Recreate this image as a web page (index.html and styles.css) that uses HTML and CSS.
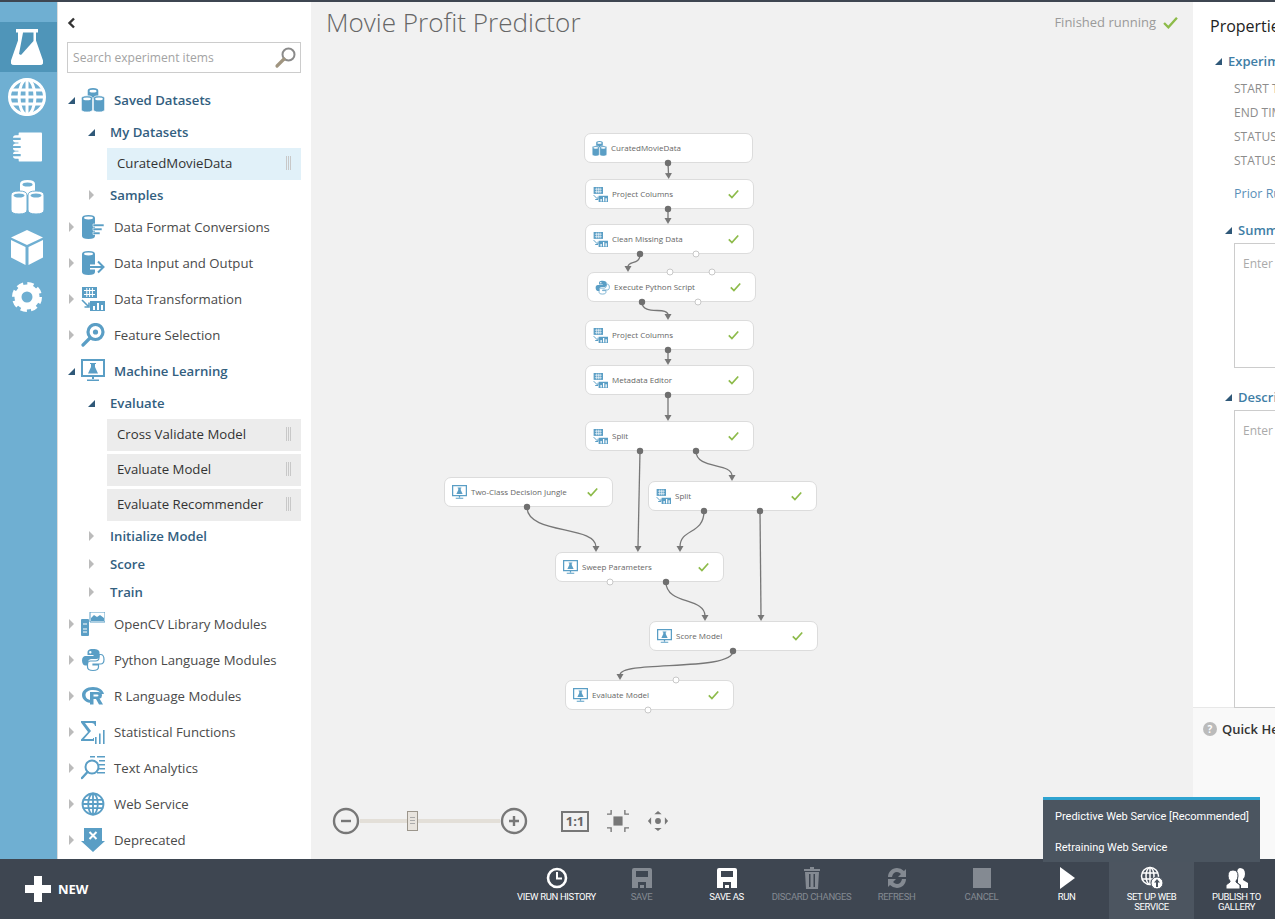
FILE: index.html
```html
<!DOCTYPE html>
<html lang="en">
<head>
    <meta charset="UTF-8">
    <title>Movie Profit Predictor</title>
    <link rel="stylesheet" href="styles.css">
</head>
<body>
    <!-- shared icons -->
    <svg class="defs" width="0" height="0">
        <symbol id="i-flask" viewBox="0 0 32 36">
            <path d="M5 0h22v3.5h-2v8l7 20q1 4.500-3 4.500H3q-4 0-3-4.500l7-20v-8H5z"/>
            <path d="M12 3.500h10.500v8.500L10 26l-2-1z" fill="var(--bg)"/>
        </symbol>
        <symbol id="i-globe" viewBox="0 0 40 40">
            <g fill="none" stroke="currentColor" stroke-width="3">
                <circle cx="20" cy="20" r="17.5"/>
                <ellipse cx="20" cy="20" rx="8" ry="17.5"/>
                <path d="M20 2v36M3 13h34M3 27h34M2 20h36"/>
            </g>
        </symbol>
        <symbol id="i-notebook" viewBox="0 0 32 32">
            <rect x="6" y="0" width="26" height="32" rx="1"/>
            <rect x="0" y="3" width="12" height="8" rx="3"/>
            <rect x="0" y="12" width="12" height="8" rx="3"/>
            <rect x="0" y="21" width="12" height="8" rx="3"/>
            <path d="M0 7h8.500M0 16h8.500M0 25h8.500" stroke="var(--bg)" stroke-width="2.400"/>
            <path d="M5 0v2.500M5 29.500v2.500" stroke="var(--bg)" stroke-width="2"/>
        </symbol>
        <symbol id="i-cylinders" viewBox="0 0 33 34">
            <path d="M9 4q0-4 7.500-4T24 4v8q0 3-7.500 3T9 12z"/>
            <ellipse cx="16.5" cy="4.500" rx="5" ry="2" fill="var(--bg)"/>
            <path d="M0 15q0-4 8-4t8 4v15q0 4-8 4t-8-4z" stroke="var(--bg)"/>
            <ellipse cx="8" cy="15.5" rx="5.5" ry="2" fill="var(--bg)"/>
            <path d="M17 15q0-4 8-4t8 4v15q0 4-8 4t-8-4z" stroke="var(--bg)"/>
            <ellipse cx="25" cy="15.5" rx="5.5" ry="2" fill="var(--bg)"/>
        </symbol>
        <symbol id="i-cube" viewBox="0 0 32 35">
            <path d="M16 0l16 7.500L16 15 0 7.500z"/>
            <path d="M0 10l14.500 7v18L0 27.500zM32 10l-14.500 7v18L32 27.500z"/>
        </symbol>
        <symbol id="i-gear" viewBox="0 0 30 30">
            <circle cx="15" cy="15" r="9" fill="none" stroke="currentColor" stroke-width="7"/>
            <circle cx="15" cy="15" r="13" fill="none" stroke="currentColor" stroke-width="4" stroke-dasharray="6.2 4"/>
        </symbol>
        <symbol id="i-cyl-text" viewBox="0 0 24 24">
            <path d="M1 3q0-3 6.500-3T14 3v18q0 3-6.500 3T1 21z"/>
            <ellipse cx="7.5" cy="3" rx="4.5" ry="1.4" fill="#fff"/>
            <path d="M12 9h11v2.500H12zM12 13h9v2.500h-9zM12 17h7v2.500h-7z" stroke="#fff" stroke-width=".6"/>
        </symbol>
        <symbol id="i-cyl-arrow" viewBox="0 0 24 24">
            <path d="M1 3q0-3 6.500-3T14 3v18q0 3-6.500 3T1 21z"/>
            <ellipse cx="7.5" cy="3" rx="4.5" ry="1.4" fill="#fff"/>
            <path d="M9 16h14M17 10l6 6-6 6" fill="none" stroke="#fff" stroke-width="5"/>
            <path d="M9 16h13M17 10.500l5.500 5.500-5.500 5.500" fill="none" stroke="currentColor" stroke-width="2"/>
        </symbol>
        <symbol id="i-transform" viewBox="0 0 24 24">
            <rect x="1" y="0" width="15" height="11"/>
            <path d="M3 3.500h11M3 7.500h11M5.800 1v9M8.600 1v9M11.400 1v9" stroke="#fff" stroke-width="1"/>
            <path d="M1 13l6 6M3.500 20H8v-4.500" fill="none" stroke="currentColor" stroke-width="1.6"/>
            <rect x="9" y="14" width="15" height="10"/>
            <path d="M12 19h2v4h-2zM16 16h2v7h-2zM20 18h2v5h-2z" fill="#fff"/>
        </symbol>
        <symbol id="i-search-dot" viewBox="0 0 24 24">
            <circle cx="14.5" cy="9" r="7.5" fill="none" stroke="currentColor" stroke-width="3.2"/>
            <circle cx="14.5" cy="9" r="2.6"/>
            <path d="M9 15l-7 7" stroke="currentColor" stroke-width="3.2" stroke-linecap="round"/>
        </symbol>
        <symbol id="i-monitor" viewBox="0 0 24 24">
            <rect x="1" y="1" width="22" height="16" fill="none" stroke="currentColor" stroke-width="2"/>
            <path d="M9 4h6v1h-1v3l3 6.500H7L10 8V5H9z"/>
            <path d="M11 17h2v3h-2zM6 20.500h12V22H6z"/>
        </symbol>
        <symbol id="i-opencv" viewBox="0 0 24 24">
            <path d="M9 0h15v10H9z" fill="none" stroke="currentColor" stroke-width="1"/>
            <path d="M10 9V6l3-3 3 2 3-2 4 3v3z"/>
            <path d="M0 8q0-1 1-1h6q1 0 1 1v15q0 1-1 1H1q-1 0-1-1z"/>
            <path d="M2 12h4M2 17h4M2 20h4" stroke="#fff" stroke-width="1.2"/>
        </symbol>
        <symbol id="i-python" viewBox="0 0 24 24">
            <path d="M12 1C7 1 6.500 3 6.500 4.500V7H12.500v1H4.500C2.500 8 1 9.500 1 12.500s1.500 5 3.500 5H7v-3c0-2 1.500-3.500 3.500-3.500h5c1.500 0 3-1.300 3-3V4.500C18.500 2.500 16.500 1 12 1zM9.300 3a1.200 1.200 0 1 1 0 2.400 1.200 1.200 0 0 1 0-2.400z"/>
            <path d="M12 22.500c5 0 5.500-2 5.500-3.500V17H12v-1h7.500c2 0 3.500-1.500 3.500-4.500s-1.500-5-3.500-5H18v3c0 2-1.500 3.500-3.500 3.500h-5C8 13 6.500 14.300 6.500 16v3c0 2 1 3.500 5.500 3.500z" fill="none" stroke="currentColor" stroke-width="1.2"/>
        </symbol>
        <symbol id="i-r" viewBox="0 0 24 24">
            <path d="M12 3C5.500 3 1 6.500 1 11s4.500 8 10 8v-3c-4 0-6.500-2-6.500-5S7.500 6 12 6s7 1.500 8 4h3c-1-4-5-7-11-7z"/>
            <path d="M9 8h8q4 0 4 3.500 0 2.500-2.500 3l3.500 6h-4l-3-5.500h-2.500V20.500H9z"/>
            <path d="M12.500 10.500v2h3.500q1.500 0 1.500-1t-1.500-1z" fill="#fff"/>
        </symbol>
        <symbol id="i-sigma" viewBox="0 0 24 24">
            <path d="M0 1h15v5h-1q-.5-3-3.500-3H4l6 8-7 8h9v-1h1v3H0v-1.500L7 12 0 2.500z"/>
            <path d="M14 17h1.600v7H14zM18 13.500h1.600V24H18zM22 10h1.600v14H22z"/>
        </symbol>
        <symbol id="i-text-search" viewBox="0 0 24 24">
            <path d="M9 0h5v1.500H9zM16 0h8v1.500h-8zM18 4h6v1.500h-6zM18 8h6v1.500h-6zM18 12h6v1.500h-6zM16 16h8v1.500h-8z"/>
            <circle cx="11" cy="11" r="6.500" fill="none" stroke="currentColor" stroke-width="2"/>
            <path d="M6.500 16L1 22" stroke="currentColor" stroke-width="2.4" stroke-linecap="round"/>
        </symbol>
        <symbol id="i-deprecated" viewBox="0 0 24 24">
            <path d="M3 0h18v13h3L12 24 0 13h3z"/>
            <path d="M8.500 4l7 7M15.500 4l-7 7" stroke="#fff" stroke-width="2"/>
        </symbol>
        <symbol id="i-check" viewBox="0 0 14 12">
            <path d="M1 6.500l4 4L13 1.500" fill="none" stroke="currentColor" stroke-width="2.2"/>
        </symbol>
    </svg>

    <div class="topline"></div>

    <div class="main">
        <nav class="rail">
            <a class="rail-item active"><svg class="rail-flask"><use href="#i-flask"/></svg></a>
            <a class="rail-item"><svg class="rail-globe"><use href="#i-globe"/></svg></a>
            <a class="rail-item"><svg class="rail-note"><use href="#i-notebook"/></svg></a>
            <a class="rail-item"><svg class="rail-cyl"><use href="#i-cylinders"/></svg></a>
            <a class="rail-item"><svg class="rail-cube"><use href="#i-cube"/></svg></a>
            <a class="rail-item"><svg class="rail-gear"><use href="#i-gear"/></svg></a>
        </nav>

        <aside class="palette">
            <div class="collapse">
                <svg width="9" height="12" viewBox="0 0 9 12"><path d="M7 1.500L2.500 6 7 10.500" fill="none" stroke="#333" stroke-width="2.400"/></svg>
            </div>
            <div class="search">
                <span>Search experiment items</span>
                <svg width="24" height="24" viewBox="0 0 24 24"><circle cx="14.5" cy="8.500" r="6" fill="none" stroke="#8a8a8a" stroke-width="2"/><path d="M10 13l-7 7" stroke="#a09580" stroke-width="3.200" stroke-linecap="round"/></svg>
            </div>

            <div class="tree">
                <div class="cat open"><i class="tri-open"></i><svg class="ico"><use href="#i-cylinders"/></svg>Saved Datasets</div>
                <div class="sub open"><i class="tri-open"></i>My Datasets</div>
                <div class="leaf selected">CuratedMovieData<b class="grip"></b></div>
                <div class="sub"><i class="tri-closed"></i>Samples</div>
                <div class="cat"><i class="tri-closed"></i><svg class="ico"><use href="#i-cyl-text"/></svg>Data Format Conversions</div>
                <div class="cat"><i class="tri-closed"></i><svg class="ico"><use href="#i-cyl-arrow"/></svg>Data Input and Output</div>
                <div class="cat"><i class="tri-closed"></i><svg class="ico"><use href="#i-transform"/></svg>Data Transformation</div>
                <div class="cat"><i class="tri-closed"></i><svg class="ico"><use href="#i-search-dot"/></svg>Feature Selection</div>
                <div class="cat open"><i class="tri-open"></i><svg class="ico"><use href="#i-monitor"/></svg>Machine Learning</div>
                <div class="sub open"><i class="tri-open"></i>Evaluate</div>
                <div class="leaf">Cross Validate Model<b class="grip"></b></div>
                <div class="leaf">Evaluate Model<b class="grip"></b></div>
                <div class="leaf">Evaluate Recommender<b class="grip"></b></div>
                <div class="sub"><i class="tri-closed"></i>Initialize Model</div>
                <div class="sub"><i class="tri-closed"></i>Score</div>
                <div class="sub"><i class="tri-closed"></i>Train</div>
                <div class="cat"><i class="tri-closed"></i><svg class="ico"><use href="#i-opencv"/></svg>OpenCV Library Modules</div>
                <div class="cat"><i class="tri-closed"></i><svg class="ico"><use href="#i-python"/></svg>Python Language Modules</div>
                <div class="cat"><i class="tri-closed"></i><svg class="ico"><use href="#i-r"/></svg>R Language Modules</div>
                <div class="cat"><i class="tri-closed"></i><svg class="ico"><use href="#i-sigma"/></svg>Statistical Functions</div>
                <div class="cat"><i class="tri-closed"></i><svg class="ico"><use href="#i-text-search"/></svg>Text Analytics</div>
                <div class="cat"><i class="tri-closed"></i><svg class="ico"><use href="#i-globe"/></svg>Web Service</div>
                <div class="cat"><i class="tri-closed"></i><svg class="ico"><use href="#i-deprecated"/></svg>Deprecated</div>
            </div>
        </aside>

        <section class="canvas">
            <header class="canvas-head">
                <h1>Movie Profit Predictor</h1>
                <div class="status">Finished running <svg class="status-check"><use href="#i-check"/></svg></div>
            </header>

            <!-- node positions are the experiment's own data -->
            <div class="node" style="left:273px;top:131px"><svg class="node-ico"><use href="#i-cylinders"/></svg>CuratedMovieData</div>
            <div class="node done" style="left:274px;top:177px"><svg class="node-ico"><use href="#i-transform"/></svg>Project Columns<svg class="node-check"><use href="#i-check"/></svg></div>
            <div class="node done" style="left:274px;top:222px"><svg class="node-ico"><use href="#i-transform"/></svg>Clean Missing Data<svg class="node-check"><use href="#i-check"/></svg></div>
            <div class="node done" style="left:276px;top:270px"><svg class="node-ico"><use href="#i-python"/></svg>Execute Python Script<svg class="node-check"><use href="#i-check"/></svg></div>
            <div class="node done" style="left:274px;top:318px"><svg class="node-ico"><use href="#i-transform"/></svg>Project Columns<svg class="node-check"><use href="#i-check"/></svg></div>
            <div class="node done" style="left:274px;top:363px"><svg class="node-ico"><use href="#i-transform"/></svg>Metadata Editor<svg class="node-check"><use href="#i-check"/></svg></div>
            <div class="node done" style="left:274px;top:419px"><svg class="node-ico"><use href="#i-transform"/></svg>Split<svg class="node-check"><use href="#i-check"/></svg></div>
            <div class="node done" style="left:133px;top:475px"><svg class="node-ico"><use href="#i-monitor"/></svg>Two-Class Decision Jungle<svg class="node-check"><use href="#i-check"/></svg></div>
            <div class="node done" style="left:337px;top:479px"><svg class="node-ico"><use href="#i-transform"/></svg>Split<svg class="node-check"><use href="#i-check"/></svg></div>
            <div class="node done" style="left:244px;top:550px"><svg class="node-ico"><use href="#i-monitor"/></svg>Sweep Parameters<svg class="node-check"><use href="#i-check"/></svg></div>
            <div class="node done" style="left:338px;top:619px"><svg class="node-ico"><use href="#i-monitor"/></svg>Score Model<svg class="node-check"><use href="#i-check"/></svg></div>
            <div class="node done" style="left:254px;top:678px"><svg class="node-ico"><use href="#i-monitor"/></svg>Evaluate Model<svg class="node-check"><use href="#i-check"/></svg></div>

            <svg class="edges" width="882" height="857" viewBox="311 2 882 857">
                <defs>
                    <marker id="head" markerUnits="userSpaceOnUse" markerWidth="8" markerHeight="8" refX="1" refY="4" orient="auto">
                        <path d="M0 .5L6 4L0 7.500z" fill="#777"/>
                    </marker>
                </defs>
                <g class="wires">
                    <path d="M668 163L668.5 174" marker-end="url(#head)"/>
                    <path d="M668 209L668 219" marker-end="url(#head)"/>
                    <path d="M640 254C640 266 628 260 628 267" marker-end="url(#head)"/>
                    <path d="M642 302C642 316 668 306 668 315" marker-end="url(#head)"/>
                    <path d="M668 350L668 360" marker-end="url(#head)"/>
                    <path d="M668 395L668 416" marker-end="url(#head)"/>
                    <path d="M640 451L638 547" marker-end="url(#head)"/>
                    <path d="M696 451C696 470 732 462 732 476" marker-end="url(#head)"/>
                    <path d="M527 507C527 535 596 525 596 547" marker-end="url(#head)"/>
                    <path d="M704 511C704 535 680 528 680 547" marker-end="url(#head)"/>
                    <path d="M760 511L761 616" marker-end="url(#head)"/>
                    <path d="M666 582C666 605 705 597 705 616" marker-end="url(#head)"/>
                    <path d="M733 651C733 672 620 660 620 675" marker-end="url(#head)"/>
                </g>
                <g class="port-on">
                    <circle cx="668" cy="163" r="3.2"/><circle cx="668" cy="209" r="3.2"/>
                    <circle cx="640" cy="254" r="3.2"/><circle cx="642" cy="302" r="3.2"/>
                    <circle cx="668" cy="350" r="3.2"/><circle cx="668" cy="395" r="3.2"/>
                    <circle cx="640" cy="451" r="3.2"/><circle cx="696" cy="451" r="3.2"/>
                    <circle cx="527" cy="507" r="3.2"/><circle cx="704" cy="511" r="3.2"/>
                    <circle cx="760" cy="511" r="3.2"/><circle cx="666" cy="582" r="3.2"/>
                    <circle cx="733" cy="651" r="3.2"/>
                </g>
                <g class="port-off">
                    <circle cx="696" cy="254" r="3"/><circle cx="670" cy="272" r="3"/>
                    <circle cx="712" cy="272" r="3"/><circle cx="698" cy="302" r="3"/>
                    <circle cx="610" cy="582" r="3"/><circle cx="676" cy="680" r="3"/>
                    <circle cx="648" cy="710" r="3"/>
                </g>
            </svg>

            <div class="zoombar">
                <svg class="zoom-btn" width="28" height="28" viewBox="0 0 28 28"><circle cx="14" cy="14" r="12" fill="none" stroke="#777" stroke-width="2.400"/><path d="M9 14h10" stroke="#777" stroke-width="2.400"/></svg>
                <div class="slider"><span class="thumb"></span></div>
                <svg class="zoom-btn" width="28" height="28" viewBox="0 0 28 28"><circle cx="14" cy="14" r="12" fill="none" stroke="#777" stroke-width="2.400"/><path d="M9 14h10M14 9v10" stroke="#777" stroke-width="2.400"/></svg>
                <span class="actual">1:1</span>
                <svg class="fit" width="24" height="24" viewBox="0 0 24 24"><path d="M7 7h10v10H7z" fill="#777"/><path d="M0 4.500h4.500V0M24 4.500h-4.500V0M0 19.500h4.500V24M24 19.500h-4.500V24" fill="none" stroke="#777" stroke-width="1.500"/></svg>
                <svg class="pan" width="24" height="24" viewBox="0 0 24 24"><circle cx="12" cy="12" r="3.200" fill="#777"/><path d="M12 1l4 3.500H8zM12 23l4-3.500H8zM1 12l3.500-4v8zM23 12l-3.500-4v8z" fill="#777"/></svg>
            </div>
        </section>

        <aside class="props">
            <div class="props-body">
                <h2>Properties</h2>
                <div class="props-head first"><i class="tri-open"></i>Experiment Details</div>
                <div class="prop-line">START TIME</div>
                <div class="prop-line">END TIME</div>
                <div class="prop-line">STATUS CODE</div>
                <div class="prop-line">STATUS DETAILS</div>
                <a class="prior">Prior Run</a>
                <div class="props-head inner"><i class="tri-open"></i>Summary</div>
                <div class="area area-sm">Enter a summary</div>
                <div class="props-head inner"><i class="tri-open"></i>Description</div>
                <div class="area area-lg">Enter text</div>
            </div>
            <div class="quick"><span class="q-mark">?</span>Quick Help</div>
        </aside>
    </div>

    <footer class="bottom">
        <div class="new">
            <svg width="26" height="26" viewBox="0 0 26 26"><path d="M9 0h8v9h9v8h-9v9H9v-9H0V9h9z" fill="#fff"/></svg>
            NEW
        </div>
        <div class="actions">
            <div class="act">
                <svg viewBox="0 0 24 24"><circle cx="12" cy="12" r="9" fill="none" stroke="currentColor" stroke-width="2.600"/><path d="M12 6v6.500h5" fill="none" stroke="currentColor" stroke-width="2"/></svg>
                VIEW RUN HISTORY
            </div>
            <div class="act off">
                <svg viewBox="0 0 24 24"><path d="M4 2h16q2 0 2 2v18H2V4q0-2 2-2zM6 5v6h12V5zM8 16v6h2v-3h4v3h2v-6z" fill-rule="evenodd" fill="currentColor"/></svg>
                SAVE
            </div>
            <div class="act">
                <svg viewBox="0 0 24 24"><path d="M4 2h16q2 0 2 2v18H2V4q0-2 2-2zM6 5v6h12V5zM8 16v6h2v-3h4v3h2v-6z" fill-rule="evenodd" fill="currentColor"/></svg>
                SAVE AS
            </div>
            <div class="act off">
                <svg viewBox="0 0 24 24"><path d="M10 1h4v2h6v2H4V3h6zM5 6h14l-1 17H6zM9 8v13h1.500V8zM13.500 8v13H15V8z" fill-rule="evenodd" fill="currentColor"/></svg>
                DISCARD CHANGES
            </div>
            <div class="act off">
                <svg viewBox="0 0 24 24"><path d="M3 11C3 6 7 2 12 2q4 0 7 3l2-2v8h-8l3-3q-2-2-4-2-4 0-5 5zM21 13c0 5-4 9-9 9q-4 0-7-3l-2 2v-8h8l-3 3q2 2 4 2 4 0 5-5z" fill="currentColor"/></svg>
                REFRESH
            </div>
            <div class="act off">
                <svg viewBox="0 0 24 24"><rect x="3" y="2" width="18" height="20" fill="currentColor"/></svg>
                CANCEL
            </div>
            <div class="act">
                <svg viewBox="0 0 24 24"><path d="M5 1l15 11L5 23z" fill="currentColor"/></svg>
                RUN
            </div>
            <div class="act current">
                <svg viewBox="0 0 24 24"><g fill="none" stroke="currentColor" stroke-width="1.500"><circle cx="10" cy="10" r="8.500"/><ellipse cx="10" cy="10" rx="4" ry="8.500"/><path d="M10 1.500v17M2 7h16M2 13h16"/></g><circle cx="17" cy="17" r="6" fill="#fff" stroke="#4c5560"/><path d="M17 13l3 3.500h-2V21h-2v-4.500h-2z" fill="#4c5560"/></svg>
                SET UP WEB<br>SERVICE
            </div>
            <div class="act">
                <svg viewBox="0 0 24 24"><path d="M15 2q5 0 5 6 0 3-2 5v1l5 3v5h-7v-3l-3-2v-5q-1-2-1-4 0-6 3-6z" fill="currentColor"/><path d="M8 4q5 0 5 6 0 3-2 5v1l4 3v4H1v-4l4-3v-1q-2-2-2-5 0-6 5-6z" fill="currentColor" stroke="#3e4651"/></svg>
                PUBLISH TO<br>GALLERY
            </div>
        </div>
        <div class="menu">
            <div class="menu-item">Predictive Web Service [Recommended]</div>
            <div class="menu-item">Retraining Web Service</div>
        </div>
    </footer>
</body>
</html>
```

FILE: styles.css
```css
* {
    box-sizing: border-box;
}
html, body {
    margin: 0;
    height: 100%;
    overflow: hidden;
}
body {
    font-family: "Open Sans", "Noto Sans", sans-serif;
    display: flex;
    flex-direction: column;
    height: 919px;
    background: #fff;
    color: #444;
}
.defs {
    position: absolute;
}
.topline {
    height: 2px;
    background: #3e4651;
}
.main {
    flex: 1;
    display: flex;
    min-height: 0;
}

/* left icon rail */
.rail {
    width: 57px;
    flex: none;
    padding-top: 20px;
    background: #6fafd2;
    color: #fff;
    --bg: #6fafd2;
    fill: #fff;
}
.rail-item {
    height: 50px;
    padding-right: 3px;
    display: flex;
    align-items: center;
    justify-content: center;
}
.rail-item.active {
    background: #4f95b9;
    --bg: #4f95b9;
}
.rail-flask { width: 32px; height: 36px; }
.rail-globe { width: 40px; height: 40px; }
.rail-note { width: 29px; height: 30px; }
.rail-cyl { width: 33px; height: 34px; }
.rail-cube { width: 32px; height: 35px; }
.rail-gear { width: 30px; height: 30px; }

/* module palette */
.palette {
    width: 254px;
    flex: none;
    padding-left: 9px;
    padding-right: 10px;
    border-left: 1px solid #ddd;
    position: relative;
    overflow: hidden;
}
.collapse {
    height: 40px;
    padding-top: 10px;
}
.search {
    height: 31px;
    border: 1px solid #ccc;
    display: flex;
    align-items: center;
    justify-content: space-between;
    padding: 0 2px 0 5px;
    font-size: 12.1px;
    color: #a3a3a3;
}
.tree {
    margin-top: 9px;
    font-size: 13.2px;
    color: #4a4a4a;
}
.cat {
    height: 36px;
    display: flex;
    align-items: center;
}
.ico {
    width: 24px;
    height: 24px;
    margin: 0 9px 0 6px;
    flex: none;
    color: #5a9ec5;
    fill: #5a9ec5;
    --bg: #fff;
}
.cat i {
    width: 8px;
    flex: none;
}
.cat.open, .sub {
    font-weight: 600;
    color: #33607f;
}
.sub {
    height: 28px;
    display: flex;
    align-items: center;
    padding-left: 20px;
}
.sub i {
    width: 23px;
    flex: none;
}
.leaf {
    height: 32px;
    margin-left: 40px;
    margin-bottom: 3px;
    padding: 0 10px 2px;
    display: flex;
    align-items: center;
    justify-content: space-between;
    background: #ececec;
    color: #333;
}
.sub + .leaf {
    margin-top: 2px;
}
.leaf.selected {
    background: #e1f1f9;
    margin-bottom: 1px;
}
.leaf + .sub {
    margin-top: -2px;
}
.leaf.selected + .sub {
    margin-top: 0;
}
.grip {
    width: 5px;
    height: 14px;
    background: repeating-linear-gradient(90deg, #c8c8c8 0 1px, transparent 1px 2px);
}
.tri-open, .tri-closed {
    display: block;
    position: relative;
    height: 10px;
}
.tri-open::before {
    content: "";
    position: absolute;
    left: 1px;
    top: 2px;
    border-style: solid;
    border-width: 0 0 7px 7px;
    border-color: transparent transparent #2f5878 transparent;
}
.tri-closed::before {
    content: "";
    position: absolute;
    left: 2px;
    top: 0;
    border-style: solid;
    border-width: 5px 0 5px 5px;
    border-color: transparent transparent transparent #bbb;
}

/* canvas */
.canvas {
    width: 882px;
    flex: none;
    position: relative;
    background: #f1f1f1;
    overflow: hidden;
}
.canvas-head {
    display: flex;
    justify-content: space-between;
    padding: 0 15px;
}
h1 {
    margin: 0;
    font-size: 26.1px;
    font-weight: 300;
    line-height: 40px;
    color: #666;
}
.status {
    display: flex;
    align-items: center;
    gap: 7px;
    height: 40px;
    font-size: 13px;
    color: #9a9a9a;
}
.status-check {
    width: 15px;
    height: 13px;
    color: #8dbb4a;
}
.node {
    position: absolute;
    width: 169px;
    height: 30px;
    padding: 0 0 2px 7px;
    display: flex;
    align-items: center;
    background: #fff;
    border: 1px solid #dcdcdc;
    border-radius: 7px;
    font-size: 8px;
    color: #666;
}
.node-ico {
    width: 15px;
    height: 15px;
    margin: 2px 4px 0 0;
    flex: none;
    color: #5a9ec5;
    fill: #5a9ec5;
    --bg: #fff;
}
.node-check {
    position: absolute;
    right: 14px;
    top: 9px;
    width: 11px;
    height: 10px;
    color: #8dbb4a;
}
.edges {
    position: absolute;
    left: 0;
    top: 0;
    pointer-events: none;
}
.wires path {
    fill: none;
    stroke: #777;
    stroke-width: 1.3;
}
.port-on circle {
    fill: #6f6f6f;
}
.port-off circle {
    fill: #fff;
    stroke: #c8c8c8;
}

/* zoom controls */
.zoombar {
    position: absolute;
    left: 21px;
    top: 805px;
    display: flex;
    align-items: center;
}
.slider {
    width: 140px;
    height: 4px;
    background: #e3dfd8;
    position: relative;
}
.thumb {
    position: absolute;
    left: 47px;
    top: -8px;
    width: 11px;
    height: 20px;
    background: repeating-linear-gradient(0deg, #e8e4de 0 2px, #aaa 2px 3px) center / 5px 9px no-repeat, #e8e4de;
    border: 1px solid #9c968c;
}
.actual {
    width: 28px;
    height: 21px;
    margin-left: 33px;
    border: 2px solid #777;
    display: flex;
    align-items: center;
    justify-content: center;
    font-size: 13px;
    font-weight: 700;
    color: #666;
}
.fit {
    margin-left: 18px;
    width: 22px;
    height: 22px;
}
.pan {
    margin-left: 18px;
    width: 22px;
    height: 22px;
}

/* properties panel, runs off the window on the right */
.props {
    flex: 1;
    min-width: 0;
    overflow: hidden;
    display: flex;
    flex-direction: column;
    white-space: nowrap;
}
.props-body {
    height: 706px;
    width: 300px;
    padding-left: 17px;
    border-bottom: 1px solid #e8e8e8;
}
.props h2 {
    margin: 0;
    padding-top: 13px;
    height: 35px;
    font-size: 16px;
    font-weight: 400;
    line-height: 22px;
    color: #222;
}
.props-head {
    display: flex;
    align-items: center;
    font-size: 13px;
    font-weight: 600;
    color: #3f7ea6;
}
.props-head i {
    width: 14px;
    flex: none;
}
.props-head.first {
    margin-left: 4px;
    margin-top: 14px;
    height: 20px;
    margin-bottom: 6px;
}
.prop-line {
    margin-left: 24px;
    height: 24px;
    line-height: 24px;
    font-size: 12px;
    color: #8c8c8c;
}
.prior {
    display: block;
    margin-left: 24px;
    margin-top: 9px;
    line-height: 24px;
    font-size: 12.5px;
    color: #5a8fb8;
}
.props-head.inner {
    margin-left: 14px;
    margin-top: 15px;
    height: 18px;
    margin-bottom: 4px;
}
.area {
    margin-left: 24px;
    border: 1px solid #ccc;
    border-right: 0;
    padding: 11px 8px;
    font-size: 12px;
    color: #aaa;
}
.area-sm { height: 125px; }
.area-lg { height: 298px; }
.area-sm + .props-head { margin-top: 20px; }
.quick {
    flex: 1;
    width: 300px;
    display: flex;
    align-items: flex-start;
    padding: 12px 0 0 10px;
    font-size: 13px;
    font-weight: 600;
    color: #333;
    background: #f9f9f9;
}
.q-mark {
    width: 14px;
    height: 14px;
    margin: 2px 5px 0 0;
    border-radius: 50%;
    background: #bbb;
    color: #fff;
    font-size: 10px;
    font-weight: 700;
    line-height: 14px;
    text-align: center;
}

/* bottom command bar */
.bottom {
    height: 60px;
    flex: none;
    position: relative;
    display: flex;
    background: #3e4651;
    color: #fff;
}
.new {
    display: flex;
    align-items: center;
    gap: 7px;
    padding-left: 25px;
    width: 514px;
    flex: none;
    font-size: 13px;
    font-weight: 700;
}
.actions {
    display: flex;
    flex: none;
}
.act {
    width: 85px;
    padding-top: 7px;
    display: flex;
    flex-direction: column;
    align-items: center;
    text-align: center;
    font-family: Roboto, sans-serif;
    font-size: 9.5px;
    line-height: 10px;
    letter-spacing: -.35px;
}
.act svg {
    width: 24px;
    height: 24px;
    margin-bottom: 2px;
}
.act.off {
    color: #848a92;
}
.act.current {
    background: #4c5560;
}
.menu {
    position: absolute;
    left: 1043px;
    top: -62px;
    width: 217px;
    height: 65px;
    background: #4b5560;
    border-top: 3px solid #2fa3d0;
    padding-top: 1px;
    font-family: Roboto, sans-serif;
    font-size: 11px;
}
.menu-item {
    padding-left: 12px;
    height: 31px;
    line-height: 31px;
}
```
